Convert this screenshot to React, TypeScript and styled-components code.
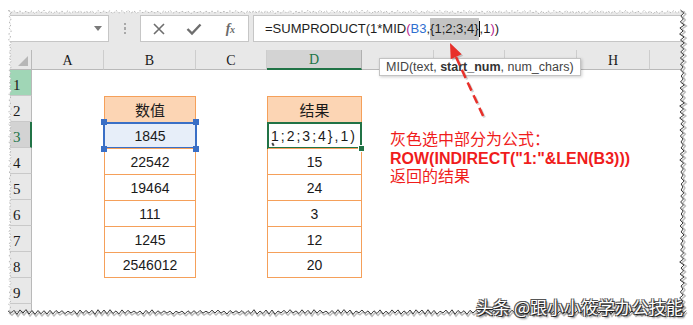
import React from 'react';
import styled, { createGlobalStyle } from 'styled-components';

const Global = createGlobalStyle`
  html, body { margin: 0; padding: 0; background: #fff; }
  body { font-family: "Liberation Sans", Arial, "Noto Sans CJK SC", sans-serif; }
`;

const ORANGE = '#f5a05a';
const GREEN = '#217346';
const HEAD_BG = '#e8e8e8';
const LINE = '#c6c6c6';

const Page = styled.div`
  position: relative;
  width: 693px;
  height: 325px;
  overflow: hidden;
  background: #fff;
  padding: 12px 10px 13px 10px;
  box-sizing: border-box;
`;

const Frame = styled.div`
  width: 673px;
  height: 300px;
  overflow: hidden;
  background: #fff;
  display: flex;
  flex-direction: column;
`;

const Toolbar = styled.div`
  flex: none;
  height: 38px;
  box-sizing: border-box;
  padding-top: 3px;
  background: ${HEAD_BG};
  display: flex;
  align-items: flex-start;
`;

const NameBox = styled.div`
  width: 99px;
  height: 27px;
  box-sizing: border-box;
  background: #fff;
  border: 1px solid ${LINE};
  border-left: none;
  display: flex;
  align-items: center;
  justify-content: flex-end;
  padding-right: 6px;
`;

const DropCaret = styled.span`
  width: 0;
  height: 0;
  border-left: 4px solid transparent;
  border-right: 4px solid transparent;
  border-top: 5px solid #7a7a7a;
`;

const Grip = styled.div`
  width: 31px;
  height: 27px;
  display: flex;
  align-items: center;
  justify-content: center;
`;

const GripDots = styled.span`
  width: 2px;
  height: 11px;
  background: repeating-linear-gradient(#a8a8a8 0 2px, transparent 2px 4.5px);
`;

const FxBox = styled.div`
  width: 109px;
  height: 27px;
  box-sizing: border-box;
  background: #fff;
  border: 1px solid ${LINE};
  display: grid;
  grid-template-columns: repeat(3, 1fr);
  align-items: center;
  justify-items: center;
`;

const FxLabel = styled.span`
  font-family: "Liberation Serif", "DejaVu Serif", serif;
  font-style: italic;
  font-weight: bold;
  font-size: 14px;
  color: #6a6a6a;
  letter-spacing: -0.5px;
  & > small { font-size: 10px; }
`;

const FormulaBox = styled.div`
  flex: 1;
  margin-left: 4px;
  height: 27px;
  box-sizing: border-box;
  background: #fff;
  border: 1px solid ${LINE};
  border-right: none;
  padding-left: 11px;
  display: flex;
  align-items: center;
  font-family: "Liberation Sans", Arial, sans-serif;
  font-size: 13px;
  color: #1e1e1e;
  white-space: nowrap;
`;

const Tok = styled.span<{ $c?: string }>`
  color: ${(p) => p.$c || '#1e1e1e'};
`;

const Hilite = styled.span`
  display: inline-block;
  height: 22px;
  line-height: 22px;
  background: #c4c4c4;
`;

const Caret = styled.span`
  display: inline-block;
  width: 1px;
  height: 16px;
  background: #000;
  vertical-align: middle;
`;

const Sheet = styled.div`
  flex: 1;
  display: grid;
  grid-template-columns: 22px 72px 92px 71px 95px 72px 71px 72px 73px 72px;
  grid-template-rows: 20px repeat(9, 26px) 1fr;
  background: #fff;
  overflow: hidden;
`;

const Corner = styled.div`
  grid-row: 1;
  grid-column: 1;
  background: ${HEAD_BG};
  border-right: 1px solid #b9b9b9;
  border-bottom: 1px solid #b9b9b9;
  display: flex;
  align-items: flex-end;
  justify-content: flex-end;
  padding: 0 3px 3px 0;
  &::after {
    content: '';
    width: 0;
    height: 0;
    border-left: 10px solid transparent;
    border-bottom: 10px solid #b7b7b7;
  }
`;

const ColHead = styled.div<{ $col: number; $active?: boolean }>`
  grid-row: 1;
  grid-column: ${(p) => p.$col};
  background: ${(p) => (p.$active ? '#d3d3d3' : HEAD_BG)};
  color: ${(p) => (p.$active ? GREEN : '#1a1a1a')};
  border-right: 1px solid ${(p) => (p.$active ? '#b0b0b0' : '#cdcdcd')};
  border-bottom: ${(p) => (p.$active ? `2px solid ${GREEN}` : '1px solid #b9b9b9')};
  display: flex;
  align-items: center;
  justify-content: center;
  padding-top: 2px;
  font-family: "Liberation Serif", "DejaVu Serif", serif;
  font-size: 14px;
`;

const RowHead = styled.div<{ $row: number; $state?: 'mark' | 'active' }>`
  grid-row: ${(p) => p.$row};
  grid-column: 1;
  background: ${(p) => (p.$state === 'mark' ? '#a0d6b6' : p.$state === 'active' ? '#d3d3d3' : HEAD_BG)};
  color: ${(p) => (p.$state === 'active' ? GREEN : '#1a1a1a')};
  border-bottom: 1px solid #c9c9c9;
  border-right: ${(p) => (p.$state === 'active' ? `2px solid ${GREEN}` : '1px solid #b9b9b9')};
  display: flex;
  align-items: flex-end;
  padding: 0 0 2px 3px;
  font-family: "Liberation Serif", "DejaVu Serif", serif;
  font-size: 15px;
  line-height: 16px;
`;

const DataTable = styled.div<{ $col: number }>`
  grid-column: ${(p) => p.$col};
  grid-row: 3 / 10;
  display: grid;
  grid-template-rows: repeat(7, 26px);
  border-left: 1px solid ${ORANGE};
  border-right: 1px solid ${ORANGE};
`;

const DataCell = styled.div<{ $head?: boolean; $last?: boolean; $sel?: 'blue' | 'green'; $left?: boolean }>`
  position: relative;
  box-sizing: border-box;
  border-top: 1px solid ${ORANGE};
  border-bottom: ${(p) => (p.$last ? `1px solid ${ORANGE}` : 'none')};
  background: ${(p) => (p.$head ? '#fcd5b4' : p.$sel === 'blue' ? '#e7eef9' : '#fff')};
  display: flex;
  align-items: center;
  justify-content: ${(p) => (p.$left ? 'flex-start' : 'center')};
  padding-left: ${(p) => (p.$left ? '3px' : '0')};
  font-family: "Liberation Sans", Arial, "Noto Sans CJK SC", sans-serif;
  font-size: ${(p) => (p.$head ? '15px' : '14px')};
  letter-spacing: ${(p) => (p.$left ? '2px' : '0')};
  color: #1a1a1a;
  white-space: nowrap;
  &::after {
    content: '';
    display: ${(p) => (p.$sel ? 'block' : 'none')};
    position: absolute;
    top: -1px;
    bottom: -1px;
    left: ${(p) => (p.$sel === 'blue' ? '-2px' : '-1px')};
    right: ${(p) => (p.$sel === 'blue' ? '-2px' : '-1px')};
    border: 2px solid ${(p) => (p.$sel === 'blue' ? '#3a6fc6' : GREEN)};
    pointer-events: none;
  }
`;

const Handle = styled.span<{ $pos: 'tl' | 'tr' | 'bl' | 'br'; $green?: boolean }>`
  position: absolute;
  z-index: 2;
  width: ${(p) => (p.$green ? '5px' : '6px')};
  height: ${(p) => (p.$green ? '5px' : '6px')};
  background: ${(p) => (p.$green ? GREEN : '#3a6fc6')};
  border: ${(p) => (p.$green ? '1px solid #fff' : 'none')};
  ${(p) => (p.$pos[0] === 't' ? 'top: -4px;' : 'bottom: -4px;')}
  ${(p) => (p.$pos[1] === 'l' ? 'left: -4px;' : 'right: -4px;')}
`;

/* tiny overflow mark under the clipped formula text */
const Tick = styled.span`
  position: absolute;
  left: 4px;
  bottom: 2px;
  width: 1.5px;
  height: 3px;
  background: #444;
  transform: rotate(-30deg);
`;

const Note = styled.div`
  grid-column: 6 / 10;
  grid-row: 4 / 7;
  padding: 9px 0 0 28px;
  color: #f01c1c;
  font-family: "Liberation Sans", Arial, "Noto Sans CJK SC", sans-serif;
  font-size: 16px;
  line-height: 18.5px;
  white-space: nowrap;
  position: relative;
  z-index: 1;
`;

const NoteStrong = styled.div`
  font-weight: bold;
`;

const Tooltip = styled.div`
  position: absolute;
  left: 379px;
  top: 58px;
  height: 18px;
  box-sizing: border-box;
  padding: 0 6px;
  background: #fff;
  border: 1px solid #c3c3c3;
  box-shadow: 1px 1px 3px rgba(0, 0, 0, 0.2);
  font-family: "Liberation Sans", Arial, sans-serif;
  font-size: 12.5px;
  line-height: 16px;
  color: #444;
  white-space: nowrap;
  & > b { color: #333; }
`;

const Overlay = styled.svg`
  position: absolute;
  left: 0;
  top: 0;
  pointer-events: none;
`;

const Watermark = styled.div`
  position: absolute;
  right: 10px;
  top: 297px;
  font-family: "Noto Sans CJK SC", sans-serif;
  font-size: 17px;
  line-height: 20px;
  color: #fff;
  white-space: nowrap;
  text-shadow: 1px 1px 0 #222, -1px -1px 0 #555, 1px -1px 0 #555, -1px 1px 0 #555, 2px 2px 2px rgba(0,0,0,0.6);
`;

function jitter(i: number) {
  const v = Math.sin(i * 12.9898) * 43758.5453;
  return v - Math.floor(v);
}

function zigH(x0: number, x1: number, y: number, amp: number, seed: number) {
  const pts: string[] = [];
  let i = 0;
  for (let x = x0; x <= x1; x += 3) {
    const dy = (i % 2 === 0 ? -1 : 1) * amp * (0.5 + jitter(i + seed));
    pts.push(`${x},${(y + dy).toFixed(1)}`);
    i++;
  }
  return pts;
}

function zigV(y0: number, y1: number, x: number, amp: number, seed: number) {
  const pts: string[] = [];
  let i = 0;
  for (let y = y0; y <= y1; y += 3) {
    const dx = (i % 2 === 0 ? -1 : 1) * amp * (0.5 + jitter(i + seed));
    pts.push(`${(x + dx).toFixed(1)},${y}`);
    i++;
  }
  return pts;
}

const Edges: React.FC = () => {
  const top = zigH(8, 686, 12, 1.2, 1);
  const bottom = zigH(8, 686, 312, 1.6, 7);
  const left = zigV(10, 314, 10, 1.0, 3);
  const right = zigV(10, 314, 682, 1.6, 5);
  return (
    <Overlay width={693} height={325} viewBox="0 0 693 325">
      <polygon points={`0,0 693,0 ${top.slice().reverse().join(' ')}`} fill="#fff" />
      <polygon points={`0,0 ${left.join(' ')} 0,325`} fill="#fff" />
      <polygon points={`693,0 ${right.join(' ')} 693,325`} fill="#fff" />
      <polygon points={`0,325 ${bottom.join(' ')} 693,325`} fill="#fff" />
      <polyline points={right.map((p) => { const [x, y] = p.split(','); return `${+x + 2},${+y + 1}`; }).join(' ')} fill="none" stroke="#bdbdbd" strokeWidth={1.5} />
      <polyline points={bottom.map((p) => { const [x, y] = p.split(','); return `${+x + 1},${+y + 2}`; }).join(' ')} fill="none" stroke="#bdbdbd" strokeWidth={1.5} />
      <polyline points={top.join(' ')} fill="none" stroke="#b8b8b8" strokeWidth={1} strokeDasharray="2 1.5" />
      <polyline points={left.join(' ')} fill="none" stroke="#b8b8b8" strokeWidth={1} strokeDasharray="2 1.5" />
      <polyline points={right.join(' ')} fill="none" stroke="#3a3a3a" strokeWidth={1} />
      <polyline points={bottom.join(' ')} fill="none" stroke="#3a3a3a" strokeWidth={1} />
    </Overlay>
  );
};

const Arrow: React.FC = () => (
  <Overlay width={693} height={325} viewBox="0 0 693 325">
    <g opacity={0.25} transform="translate(1.5,1.5)">
      <line x1={456} y1={57} x2={484} y2={118} stroke="#555" strokeWidth={2.5} strokeDasharray="9 5" />
      <polygon points="450,43 461.7,54.2 450.7,59.2" fill="#555" />
    </g>
    <line x1={456} y1={57} x2={484} y2={118} stroke="#e8302a" strokeWidth={2.5} strokeDasharray="9 5" />
    <polygon points="450,43 461.7,54.2 450.7,59.2" fill="#e8302a" />
  </Overlay>
);

const CancelIcon = () => (
  <svg width="14" height="14" viewBox="0 0 14 14">
    <path d="M2 2 L12 12 M12 2 L2 12" stroke="#6e6e6e" strokeWidth="1.6" fill="none" />
  </svg>
);

const EnterIcon = () => (
  <svg width="16" height="14" viewBox="0 0 16 14">
    <path d="M1.5 7 L6 11.5 L14.5 2.5" stroke="#6e6e6e" strokeWidth="2.4" fill="none" />
  </svg>
);

// Letters of E, F, G and I are hidden in the reference (tooltip / torn edge)
const COLS = ['A', 'B', 'C', 'D', '', '', '', 'H', ''];
const B_VALUES = ['1845', '22542', '19464', '111', '1245', '2546012'];
const D_VALUES = ['15', '24', '3', '12', '20'];

export default function App() {
  return (
    <Page>
      <Global />
      <Frame>
        <Toolbar>
          <NameBox>
            <DropCaret />
          </NameBox>
          <Grip>
            <GripDots />
          </Grip>
          <FxBox>
            <CancelIcon />
            <EnterIcon />
            <FxLabel>f<small>x</small></FxLabel>
          </FxBox>
          <FormulaBox>
            <Tok>=SUMPRODUCT(1*MID</Tok>
            <Tok $c="#b5258f">(</Tok>
            <Tok $c="#2f6fd0">B3</Tok>
            <Tok>,</Tok>
            <Hilite>{'{1;2;3;4}'}</Hilite>
            <Caret />
            <Tok>,1</Tok>
            <Tok $c="#b5258f">)</Tok>
            <Tok>)</Tok>
          </FormulaBox>
        </Toolbar>
        <Sheet>
          <Corner />
          {COLS.map((c, i) => (
            <ColHead key={i} $col={i + 2} $active={c === 'D'}>
              {c}
            </ColHead>
          ))}
          {Array.from({ length: 9 }, (_, i) => (
            <RowHead key={i} $row={i + 2} $state={i === 0 ? 'mark' : i === 2 ? 'active' : undefined}>
              {i + 1}
            </RowHead>
          ))}
          <RowHead $row={11} />
          <DataTable $col={3}>
            <DataCell $head>数值</DataCell>
            {B_VALUES.map((v, i) => (
              <DataCell key={v} $sel={i === 0 ? 'blue' : undefined} $last={i === B_VALUES.length - 1}>
                {v}
                {i === 0 && (
                  <>
                    <Handle $pos="tl" />
                    <Handle $pos="tr" />
                    <Handle $pos="bl" />
                    <Handle $pos="br" />
                  </>
                )}
              </DataCell>
            ))}
          </DataTable>
          <DataTable $col={5}>
            <DataCell $head>结果</DataCell>
            <DataCell $sel="green" $left>
              {'1;2;3;4},1)'}
              <Tick />
              <Handle $pos="br" $green />
            </DataCell>
            {D_VALUES.map((v, i) => (
              <DataCell key={v} $last={i === D_VALUES.length - 1}>
                {v}
              </DataCell>
            ))}
          </DataTable>
          <Note>
            <div>灰色选中部分为公式：</div>
            <NoteStrong>ROW(INDIRECT("1:"&amp;LEN(B3)))</NoteStrong>
            <div>返回的结果</div>
          </Note>
        </Sheet>
      </Frame>
      <Tooltip>
        MID(text, <b>start_num</b>, num_chars)
      </Tooltip>
      <Arrow />
      <Edges />
      <Watermark>头条 @跟小小筱学办公技能</Watermark>
    </Page>
  );
}
